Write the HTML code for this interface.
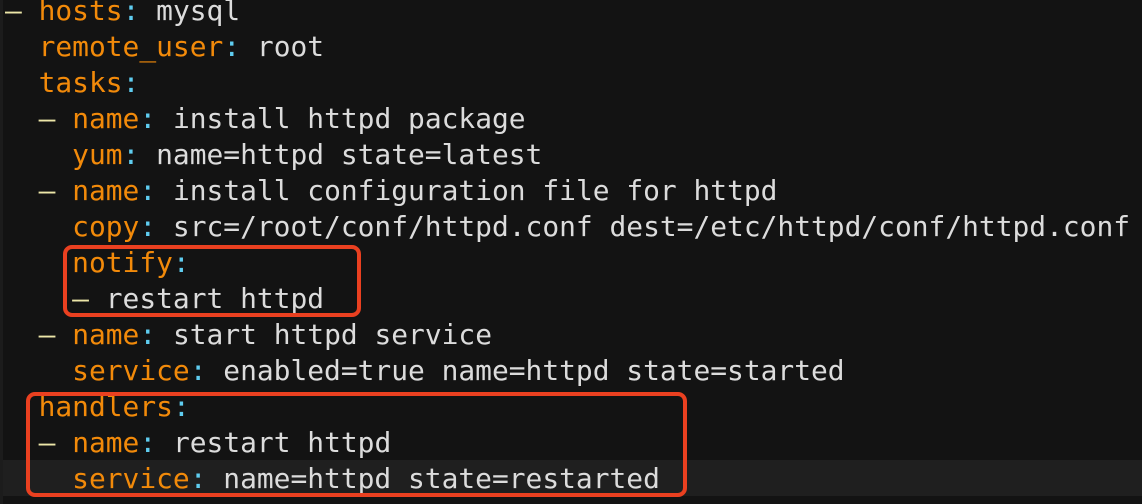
<!DOCTYPE html>
<html><head><style>
html,body{margin:0;padding:0;}
body{width:1142px;height:504px;background:#131313;overflow:hidden;position:relative;}
.strip{position:absolute;left:0;top:0;width:3px;height:504px;background:#1c1c1c;}
.hl{position:absolute;left:3px;top:460px;width:1139px;height:36px;background:#1f1f1f;}
pre{position:absolute;left:5px;top:-7px;margin:0;font-family:"DejaVu Sans Mono","Liberation Mono",monospace;font-size:27.9px;line-height:36px;color:#dcdcdc;}
.k{color:#f28a0a}.c{color:#5fcdf0}.d{color:#ece6a8}
.box{position:absolute;border:4px solid #ea4020;border-radius:9px;}
</style></head><body>
<div class="strip"></div>
<div class="hl"></div>
<pre><span class="d">–</span> <span class="k">hosts</span><span class="c">:</span> mysql
  <span class="k">remote_user</span><span class="c">:</span> root
  <span class="k">tasks</span><span class="c">:</span>
  <span class="d">–</span> <span class="k">name</span><span class="c">:</span> install httpd package
    <span class="k">yum</span><span class="c">:</span> name=httpd state=latest
  <span class="d">–</span> <span class="k">name</span><span class="c">:</span> install configuration file for httpd
    <span class="k">copy</span><span class="c">:</span> src=/root/conf/httpd.conf dest=/etc/httpd/conf/httpd.conf
    <span class="k">notify</span><span class="c">:</span>
    <span class="d">–</span> restart httpd
  <span class="d">–</span> <span class="k">name</span><span class="c">:</span> start httpd service
    <span class="k">service</span><span class="c">:</span> enabled=true name=httpd state=started
  <span class="k">handlers</span><span class="c">:</span>
  <span class="d">–</span> <span class="k">name</span><span class="c">:</span> restart httpd
    <span class="k">service</span><span class="c">:</span> name=httpd state=restarted
</pre>
<div class="box" style="left:63px;top:245px;width:290px;height:64px;"></div>
<div class="box" style="left:26px;top:392px;width:653px;height:97px;"></div>
</body></html>
